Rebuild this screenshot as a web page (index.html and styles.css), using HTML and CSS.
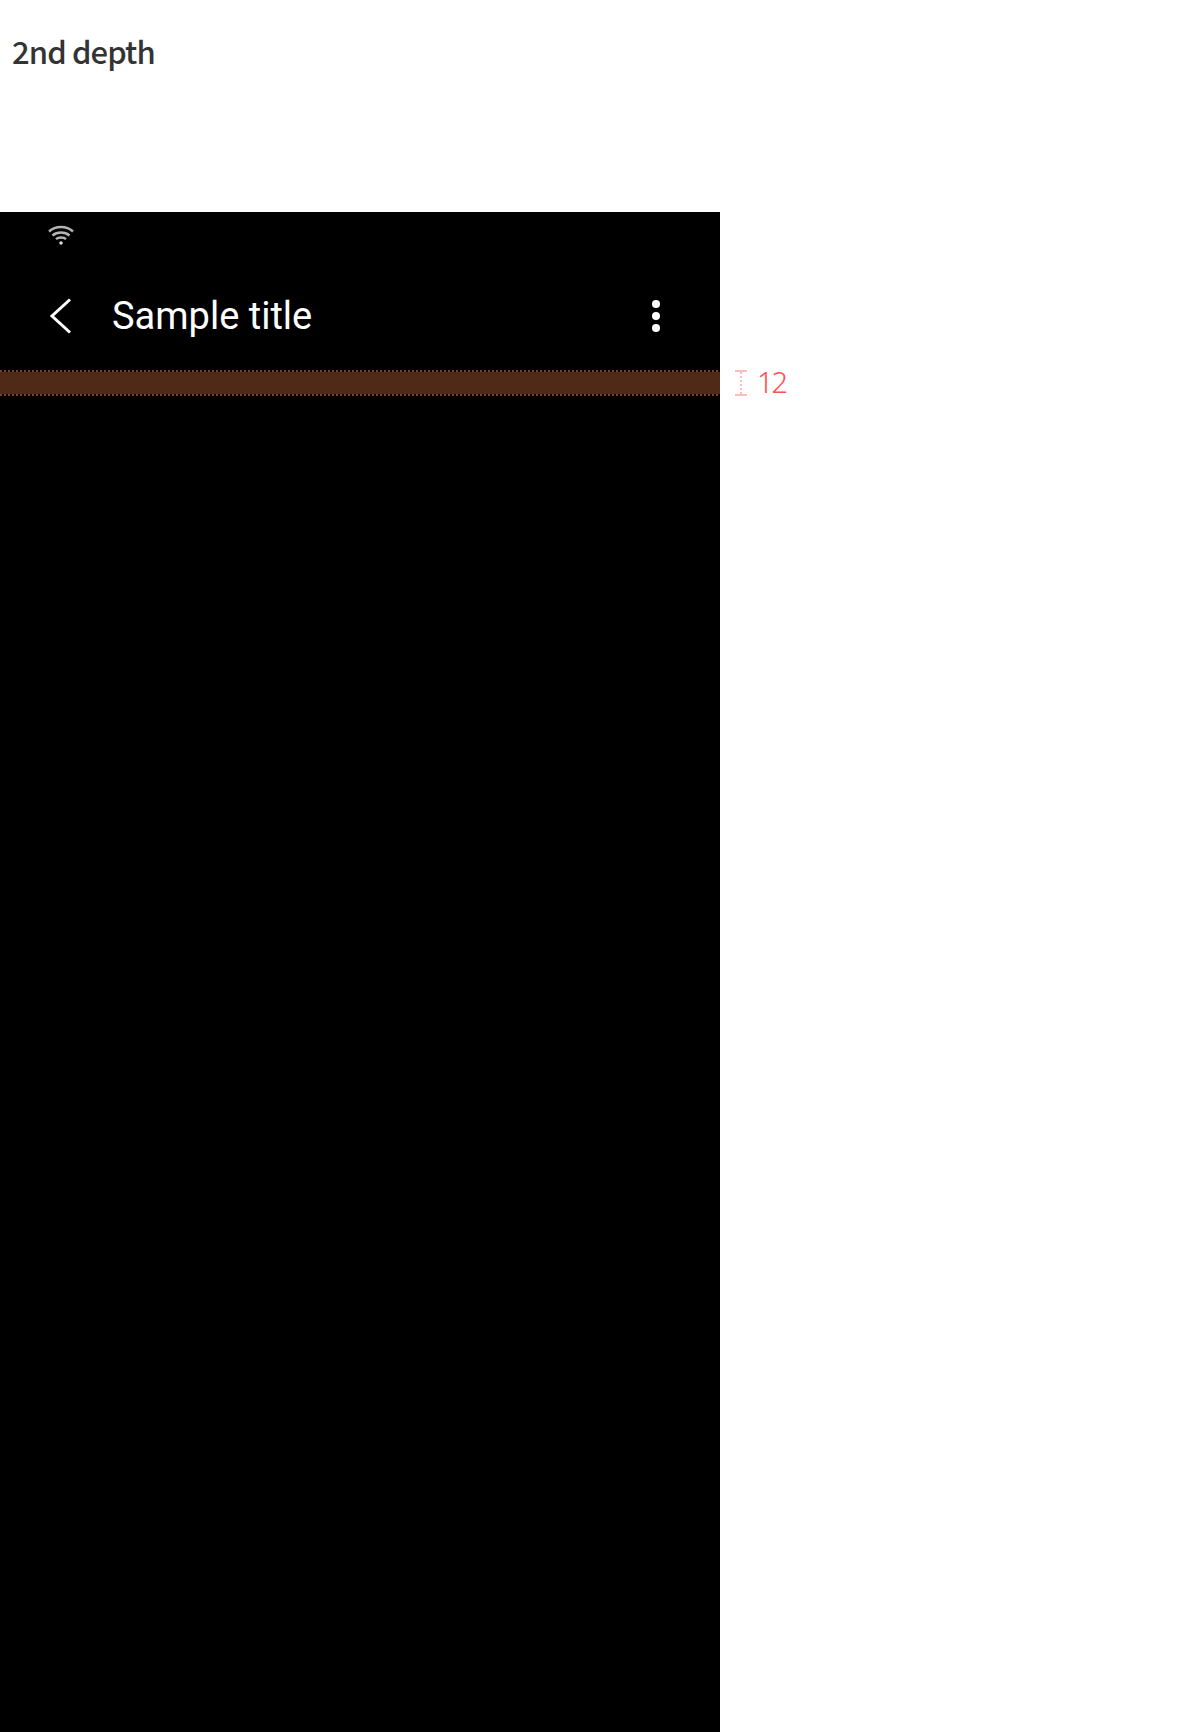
FILE: index.html
```html
<!DOCTYPE html>
<html lang="en">

<head>
    <meta charset="utf-8">
    <title>2nd depth</title>
    <link rel="stylesheet" href="styles.css">
</head>

<body>
    <h1 class="depth">2nd depth</h1>

    <div class="spec">
        <section class="phone">
            <div class="status">
                <svg class="wifi" width="28" height="22" viewBox="0 0 28 22" fill="none" stroke="#b4b4b4" stroke-width="2.400">
                    <path d="M2 7.500C8.500 1.500 19.500 1.500 26 7.500" />
                    <path d="M5.500 11.500C10 7.500 18 7.500 22.500 11.500" />
                    <path d="M9 15.200C11.500 13 16.500 13 19 15.200" />
                    <circle cx="14" cy="19" r="1.800" fill="#d8d8d8" stroke="none" />
                </svg>
            </div>
            <header class="appbar">
                <svg class="back" width="26" height="36" viewBox="0 0 26 36" fill="none" stroke="#fff" stroke-width="3">
                    <path d="M22 1.500 L4 18 L22 34.500" />
                </svg>
                <span class="title">Sample title</span>
                <div class="more">
                    <i></i><i></i><i></i>
                </div>
            </header>
            <div class="band"></div>
        </section>

        <div class="measure">
            <svg width="14" height="26" viewBox="0 0 14 26">
                <path d="M1 1H13M1 25H13" stroke="#ffbcbc" stroke-width="2" />
                <path d="M7 2V24" stroke="#ffbcbc" stroke-width="2" stroke-dasharray="2 2" />
            </svg>
            <span class="num">12</span>
        </div>
    </div>
</body>

</html>
```

FILE: styles.css
```css
html,
body {
    margin: 0;
    height: 1732px;
    overflow: hidden;
    background: #fff;
}

.depth {
    height: 212px;
    margin: 0;
    padding: 30px 0 0 12px;
    box-sizing: border-box;
    font-family: "Noto Sans CJK KR", "Noto Sans", sans-serif;
    font-size: 31px;
    line-height: 42px;
    font-weight: 500;
    letter-spacing: -0.9px;
    color: #333;
}

.spec {
    display: flex;
}

.phone {
    width: 720px;
    height: 1520px;
    background: #000;
}

.status {
    height: 48px;
    padding: 12px 0 0 47px;
    box-sizing: border-box;
}

.wifi {
    display: block;
}

.appbar {
    height: 110px;
    box-sizing: border-box;
    display: flex;
    align-items: center;
    padding: 2px 60px 0 48px;
}

.back {
    flex: none;
}

.title {
    flex: 1;
    margin-left: 38px;
    font-family: Roboto, sans-serif;
    font-size: 38px;
    color: #fff;
}

.more {
    display: flex;
    flex-direction: column;
    gap: 4px;
}

.more i {
    width: 8px;
    height: 8px;
    border-radius: 50%;
    background: #fff;
}

/* dotted lines on top and bottom edge of the 12 spacing */
.band {
    height: 26px;
    background:
        repeating-linear-gradient(90deg, #8a3a30 0 2px, transparent 2px 4px) top / 100% 2px no-repeat,
        repeating-linear-gradient(90deg, #8a3a30 0 2px, transparent 2px 4px) bottom / 100% 2px no-repeat,
        linear-gradient(#4f2a17, #4f2a17) center / 100% 22px no-repeat;
}

.measure {
    display: flex;
    align-items: center;
    height: 26px;
    margin-top: 158px;
    padding-left: 14px;
}

.num {
    margin: -4px 0 0 9px;
    font-family: "Noto Sans", sans-serif;
    font-size: 29px;
    font-weight: 300;
    letter-spacing: -2px;
    color: #ff5050;
}
```
